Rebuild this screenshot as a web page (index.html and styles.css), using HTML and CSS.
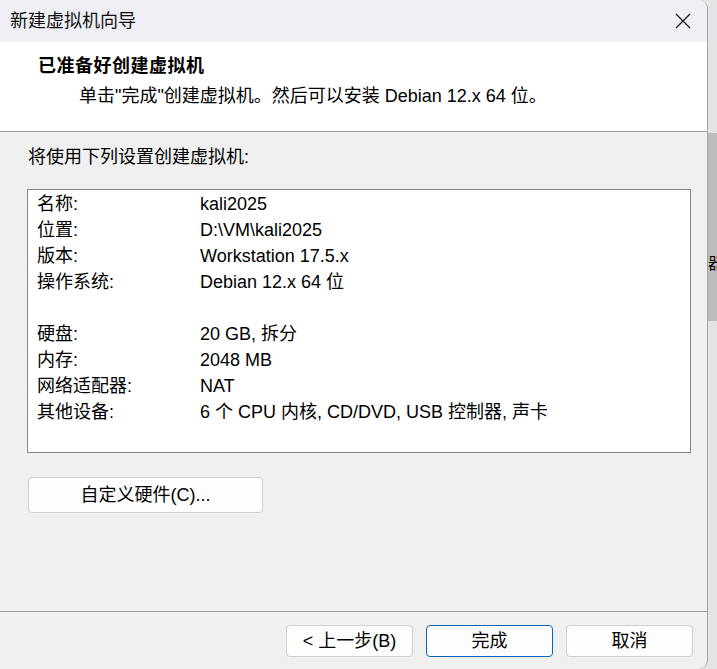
FILE: index.html
```html
<!DOCTYPE html>
<html lang="zh-CN">
<head>
<meta charset="utf-8">
<title>新建虚拟机向导</title>
<link rel="stylesheet" href="styles.css">
</head>
<body>
<div class="screen">
  <div class="window">
    <div class="titlebar">
      <span class="title">新建虚拟机向导</span>
      <svg class="close" width="16" height="16" viewBox="0 0 16 16"><path d="M1 1 L15 15 M15 1 L1 15" stroke="#1a1a1a" stroke-width="1.3" fill="none"/></svg>
    </div>
    <div class="header">
      <div class="h-title">已准备好创建虚拟机</div>
      <div class="h-sub">单击"完成"创建虚拟机。然后可以安装 Debian 12.x 64 位。</div>
    </div>
    <div class="content">
      <div class="intro">将使用下列设置创建虚拟机:</div>
      <div class="summary">
        <div class="row"><span class="k">名称:</span><span class="v">kali2025</span></div>
        <div class="row"><span class="k">位置:</span><span class="v">D:\VM\kali2025</span></div>
        <div class="row"><span class="k">版本:</span><span class="v">Workstation 17.5.x</span></div>
        <div class="row"><span class="k">操作系统:</span><span class="v">Debian 12.x 64 位</span></div>
        <div class="row"></div>
        <div class="row"><span class="k">硬盘:</span><span class="v">20 GB, 拆分</span></div>
        <div class="row"><span class="k">内存:</span><span class="v">2048 MB</span></div>
        <div class="row"><span class="k">网络适配器:</span><span class="v">NAT</span></div>
        <div class="row"><span class="k">其他设备:</span><span class="v">6 个 CPU 内核, CD/DVD, USB 控制器, 声卡</span></div>
      </div>
      <div class="custom-wrap"><button class="btn custom">自定义硬件(C)...</button></div>
    </div>
    <div class="footer">
      <button class="btn">&lt; 上一步(B)</button>
      <button class="btn primary">完成</button>
      <button class="btn">取消</button>
    </div>
  </div>
  <div class="strip">
    <div class="strip-top"></div>
    <div class="strip-mid"><span class="glyph">器</span></div>
    <div class="strip-bot"></div>
  </div>
</div>
</body>
</html>
```
FILE: styles.css
```css
* { box-sizing: border-box; }
html, body { margin: 0; padding: 0; }
body {
  font-family: "Liberation Sans", "Noto Sans CJK SC", sans-serif;
  font-size: 18px;
  color: #000;
  background: #e6e6e6;
}
.screen {
  display: flex;
  width: 717px;
  height: 669px;
  overflow: hidden;
}
.window {
  width: 708px;
  height: 669px;
  display: flex;
  flex-direction: column;
  border-right: 1px solid #a3a3a3;
  border-radius: 0 9px 9px 0;
  overflow: hidden;
  background: #f0f0f0;
  flex: none;
}
.titlebar {
  height: 42px;
  background: #eff0f5;
  display: flex;
  align-items: center;
  justify-content: space-between;
  padding: 0 16px 0 10px;
  flex: none;
}
.title {
  font-size: 18px;
  line-height: 24px;
  color: #111;
}
.close { display: block; margin-top: 0; }
.header {
  height: 90px;
  background: #fff;
  border-bottom: 1px solid #a0a0a0;
  padding: 12px 0 0 38px;
  flex: none;
}
.h-title {
  font-weight: bold;
  line-height: 24px;
  letter-spacing: 0.5px;
}
.h-sub {
  margin-top: 6px;
  padding-left: 41px;
  line-height: 24px;
}
.content {
  flex: 1;
  padding: 13px 0 0 27px;
}
.intro {
  line-height: 24px;
  padding-left: 1px;
}
.summary {
  margin-top: 20px;
  width: 664px;
  height: 264px;
  background: #fff;
  border: 1px solid #848790;
  padding: 1px 0 0 9px;
}
.row {
  display: flex;
  height: 26px;
  line-height: 26px;
}
.k { width: 163px; flex: none; }
.v { white-space: nowrap; }
.custom-wrap { margin-top: 24px; padding-left: 1px; }
.btn {
  font-family: "Liberation Sans", "Noto Sans CJK SC", sans-serif;
  font-size: 18px;
  color: #000;
  background: #fdfdfd;
  border: 1px solid #d0d0d0;
  border-radius: 4px;
  width: 127px;
  height: 32px;
  padding: 0;
  line-height: 30px;
}
.custom {
  width: 235px;
  height: 36px;
  line-height: 34px;
}
.primary { border-color: #0a67c0; }
.footer {
  height: 58px;
  border-top: 1px solid #a0a0a0;
  display: flex;
  justify-content: flex-end;
  gap: 13px;
  padding: 13px 14px 0 0;
  flex: none;
}
.strip {
  flex: 1;
  display: flex;
  flex-direction: column;
  background: #e4e4e4;
}
.strip-top { height: 133px; }
.strip-mid {
  height: 188px;
  background: #bcbcbc;
  position: relative;
  overflow: hidden;
}
.glyph {
  position: absolute;
  left: 0;
  top: 119px;
  font-family: "Noto Sans CJK SC", sans-serif;
  font-size: 16px;
  line-height: 20px;
}
.strip-bot { flex: 1; }
```
